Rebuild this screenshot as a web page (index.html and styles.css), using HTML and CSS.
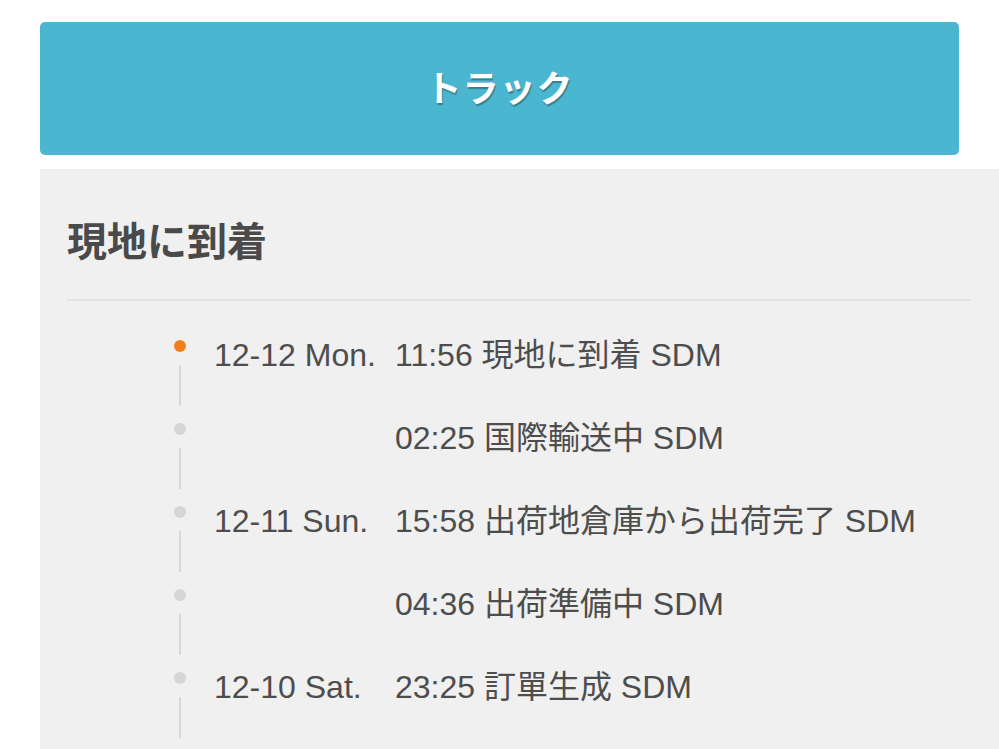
FILE: index.html
```html
<!DOCTYPE html>
<html lang="ja">
<head>
    <meta charset="UTF-8">
    <meta name="viewport" content="width=device-width, initial-scale=1.0">
    <title>トラック</title>
    <link rel="stylesheet" href="styles.css">
</head>
<body>
    <div class="track-btn">トラック</div>

    <div class="panel">
        <h2 class="status-title">現地に到着</h2>

        <ul class="timeline">
            <li class="step current">
                <div class="marker"><span class="dot"></span><span class="line"></span></div>
                <span class="date">12-12 Mon.</span>
                <span class="event">11:56 現地に到着 SDM</span>
            </li>
            <li class="step">
                <div class="marker"><span class="dot"></span><span class="line"></span></div>
                <span class="date"></span>
                <span class="event">02:25 国際輸送中 SDM</span>
            </li>
            <li class="step">
                <div class="marker"><span class="dot"></span><span class="line"></span></div>
                <span class="date">12-11 Sun.</span>
                <span class="event">15:58 出荷地倉庫から出荷完了 SDM</span>
            </li>
            <li class="step">
                <div class="marker"><span class="dot"></span><span class="line"></span></div>
                <span class="date"></span>
                <span class="event">04:36 出荷準備中 SDM</span>
            </li>
            <li class="step">
                <div class="marker"><span class="dot"></span><span class="line"></span></div>
                <span class="date">12-10 Sat.</span>
                <span class="event">23:25 訂單生成 SDM</span>
            </li>
        </ul>
    </div>
</body>
</html>
```

FILE: styles.css
```css
body {
    margin: 0;
    background: #fff;
    font-family: "Liberation Sans", "Noto Sans CJK JP", sans-serif;
    color: #4d4d4d;
    overflow: hidden;
}
.track-btn {
    margin: 22px 40px 0;
    height: 133px;
    box-sizing: border-box;
    padding-bottom: 6px;
    background-color: #4ab6cf;
    border-radius: 5px;
    display: flex;
    align-items: center;
    justify-content: center;
    color: #fff;
    font-family: "Noto Sans CJK JP", sans-serif;
    font-size: 36px;
    font-weight: bold;
    letter-spacing: 1px;
    text-shadow: 1px 2px 1px rgba(0, 0, 0, 0.3);
}
.panel {
    margin: 14px 0 0 40px;
    padding: 0 28px 0 27px;
    background-color: #f0f0f0;
    height: 600px;
}
.status-title {
    margin: 0;
    height: 132px;
    box-sizing: border-box;
    padding-top: 50px;
    font-family: "Noto Sans CJK JP", sans-serif;
    font-size: 40px;
    line-height: 1;
    font-weight: bold;
    color: #4a4a4a;
    border-bottom: 2px solid #e2e2e2;
}
.timeline {
    list-style: none;
    margin: 0;
    padding: 35px 0 0 105px;
}
.step {
    display: flex;
    height: 83px;
    font-size: 32px;
    line-height: 38px;
}
.marker {
    width: 16px;
    display: flex;
    flex-direction: column;
    align-items: center;
    margin-right: 26px;
}
.dot {
    width: 12px;
    height: 12px;
    margin-top: 4px;
    border-radius: 50%;
    background-color: #d6d6d6;
}
.current .dot {
    background-color: #f27f1b;
}
.line {
    width: 2px;
    height: 41px;
    margin-top: 13px;
    background-color: #d8d8d8;
}
.date {
    width: 181px;
    flex-shrink: 0;
}
.event {
    white-space: nowrap;
}
```
